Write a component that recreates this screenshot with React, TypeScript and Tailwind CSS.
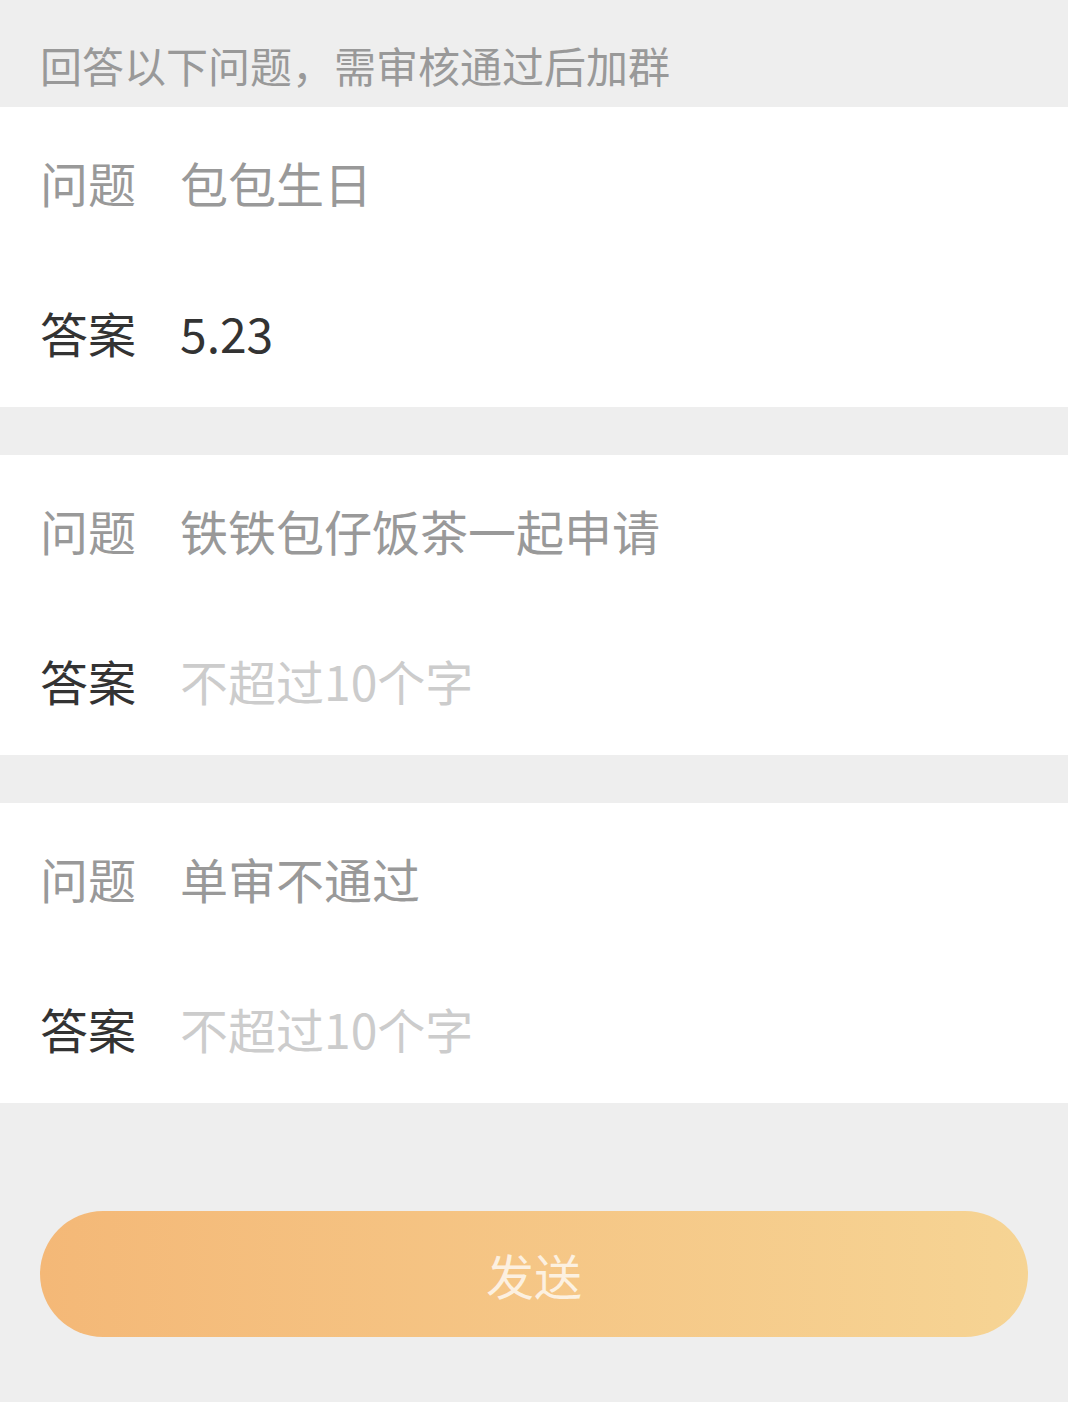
import React from "react";

const font = { fontFamily: '"Noto Sans CJK SC", "Noto Sans", sans-serif' };

const questions = [
  { question: "包包生日", answer: "5.23" },
  { question: "铁铁包仔饭茶一起申请", answer: "" },
  { question: "单审不通过", answer: "" },
];

function QuestionCard({ question, answer }: { question: string; answer: string }) {
  return (
    <div className="bg-white px-[40px]">
      <div className="flex h-[150px] items-center text-[48px] leading-none">
        <span className="w-[140px] shrink-0 text-[#999999]">问题</span>
        <span className="text-[#999999]">{question}</span>
      </div>
      <div className="flex h-[150px] items-center text-[48px] leading-none">
        <span className="w-[140px] shrink-0 text-[#333333]">答案</span>
        {answer ? (
          <span className="text-[#333333]">{answer}</span>
        ) : (
          <span className="text-[#cccccc]">不超过10个字</span>
        )}
      </div>
    </div>
  );
}

export default function App() {
  return (
    <main className="min-h-[1402px] bg-[#eeeeee]" style={font}>
      <div className="h-[107px] px-[40px] pt-[44px] text-[42px] leading-none text-[#999999]">
        回答以下问题，需审核通过后加群
      </div>

      <div className="flex flex-col gap-[48px]">
        {questions.map((q) => (
          <QuestionCard key={q.question} question={q.question} answer={q.answer} />
        ))}
      </div>

      <div className="px-[40px] pt-[108px]">
        <button className="flex h-[126px] w-full items-center justify-center rounded-full bg-gradient-to-r from-[#f4b877] to-[#f6d494] text-[48px] leading-none text-white/75">
          发送
        </button>
      </div>
    </main>
  );
}
